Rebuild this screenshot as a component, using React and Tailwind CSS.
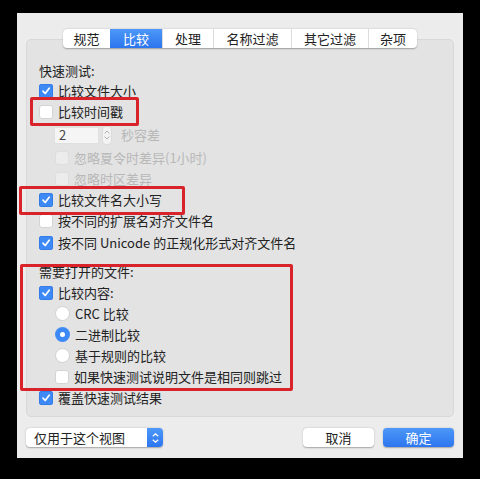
import React from 'react';

const font = { fontFamily: '"Noto Sans CJK SC", "Noto Sans", sans-serif' };

function Check({ checked, disabled }) {
  if (checked) {
    return (
      <span className="w-[14px] h-[14px] rounded-[3px] bg-[#3d8af7] flex items-center justify-center shrink-0 shadow-[inset_0_0_0_0.5px_#2a6fd8]">
        <svg width="10" height="10" viewBox="0 0 10 10">
          <path d="M2 5.2 L4.2 7.5 L8.2 2.2" fill="none" stroke="white" strokeWidth="1.7" strokeLinecap="round" strokeLinejoin="round" />
        </svg>
      </span>
    );
  }
  return (
    <span
      className={`w-[14px] h-[14px] rounded-[3px] shrink-0 ${
        disabled ? 'bg-[#ececec] border border-[#dedede]' : 'bg-white border border-[#d4d4d4]'
      }`}
    />
  );
}

function Radio({ selected }) {
  if (selected) {
    return (
      <span className="w-[15px] h-[15px] rounded-full bg-[#3d8af7] flex items-center justify-center shrink-0">
        <span className="w-[5px] h-[5px] rounded-full bg-white" />
      </span>
    );
  }
  return <span className="w-[15px] h-[15px] rounded-full bg-white border border-[#d0d0d0] shrink-0" />;
}

function Row({ h = 'h-[21px]', indent, children }) {
  return <div className={`flex items-center ${h} ${indent ? 'pl-[28px]' : 'pl-[12px]'} gap-[5px]`}>{children}</div>;
}

export default function App() {
  const tabs = ['规范', '比较', '处理', '名称过滤', '其它过滤', '杂项'];
  const widths = ['w-[47px]', 'w-[52px]', 'w-[51px]', 'w-[78px]', 'w-[77px]', 'w-[49px]'];

  return (
    <div className="w-[480px] h-[479px] bg-black relative text-[13px] text-[#222]" style={font}>
      <div className="absolute left-[17px] top-[13px] w-[446px] h-[445px] bg-[#ececec] flex flex-col px-[9px] pt-[16px]">
        {/* tabs */}
        <div className="flex justify-center relative z-10">
          <div className="flex h-[19px] bg-white rounded-[4px] shadow-[0_0.5px_1.5px_rgba(0,0,0,0.3)] overflow-hidden">
            {tabs.map((t, i) => (
              <div
                key={t}
                className={`${widths[i]} flex items-center justify-center leading-none ${
                  i === 1
                    ? 'bg-gradient-to-b from-[#4d98f8] to-[#2c75ef] text-white'
                    : 'text-[#222]'
                } ${i > 1 ? 'border-l border-[#dcdcdc]' : ''}`}
              >
                {t}
              </div>
            ))}
          </div>
        </div>

        {/* group box */}
        <div className="-mt-[9px] h-[378px] bg-[#e3e3e3] rounded-[5px] border border-[#d8d8d8] pt-[21px] flex flex-col">
          <Row h="h-[20px]">
            <span>快速测试:</span>
          </Row>
          <Row h="h-[20px]">
            <Check checked />
            <span>比较文件大小</span>
          </Row>
          <Row h="h-[22px]">
            <Check />
            <span>比较时间戳</span>
          </Row>
          <div className="flex items-center h-[24px] pl-[27px]">
            <div className="w-[45px] h-[17px] bg-[#f5f5f5] border border-[#e0e0e0] flex items-center pl-[4px] text-[#444]">2</div>
            <div className="ml-[3px] w-[10px] h-[19px] rounded-[4px] bg-[#f3f3f3] border border-[#dcdcdc] flex flex-col items-center justify-center gap-[2px]">
              <svg width="6" height="4" viewBox="0 0 6 4"><path d="M0.5 3.5 L3 1 L5.5 3.5" fill="none" stroke="#b0b0b0" strokeWidth="1" /></svg>
              <svg width="6" height="4" viewBox="0 0 6 4"><path d="M0.5 0.5 L3 3 L5.5 0.5" fill="none" stroke="#b0b0b0" strokeWidth="1" /></svg>
            </div>
            <span className="ml-[9px] text-[#b8b8b8]">秒容差</span>
          </div>
          <Row indent>
            <Check disabled />
            <span className="text-[#b8b8b8]">忽略夏令时差异(1小时)</span>
          </Row>
          <Row indent>
            <Check disabled />
            <span className="text-[#b8b8b8]">忽略时区差异</span>
          </Row>
          <Row>
            <Check checked />
            <span>比较文件名大小写</span>
          </Row>
          <Row h="h-[22px]">
            <Check />
            <span>按不同的扩展名对齐文件名</span>
          </Row>
          <Row>
            <Check checked />
            <span>按不同 Unicode 的正规化形式对齐文件名</span>
          </Row>
          <div className="h-[9px]" />
          <Row h="h-[20px]">
            <span>需要打开的文件:</span>
          </Row>
          <Row>
            <Check checked />
            <span>比较内容:</span>
          </Row>
          <Row indent>
            <Radio />
            <span>CRC 比较</span>
          </Row>
          <Row indent>
            <Radio selected />
            <span>二进制比较</span>
          </Row>
          <Row indent>
            <Radio />
            <span>基于规则的比较</span>
          </Row>
          <Row indent>
            <Check />
            <span>如果快速测试说明文件是相同则跳过</span>
          </Row>
          <Row>
            <Check checked />
            <span>覆盖快速测试结果</span>
          </Row>
        </div>

        {/* bottom bar */}
        <div className="flex items-center mt-[11px] h-[19px]">
          <div className="w-[137px] h-[19px] bg-white rounded-[4px] shadow-[0_0.5px_1.5px_rgba(0,0,0,0.3)] flex items-center overflow-hidden">
            <span className="flex-1 pl-[8px] leading-none">仅用于这个视图</span>
            <div className="w-[16px] h-full bg-gradient-to-b from-[#4d98f8] to-[#2c75ef] flex flex-col items-center justify-center gap-[2px]">
              <svg width="7" height="4" viewBox="0 0 7 4"><path d="M0.8 3.3 L3.5 0.8 L6.2 3.3" fill="none" stroke="white" strokeWidth="1.2" /></svg>
              <svg width="7" height="4" viewBox="0 0 7 4"><path d="M0.8 0.7 L3.5 3.2 L6.2 0.7" fill="none" stroke="white" strokeWidth="1.2" /></svg>
            </div>
          </div>
          <div className="flex-1" />
          <div className="w-[71px] h-[19px] bg-white rounded-[4px] shadow-[0_0.5px_1.5px_rgba(0,0,0,0.3)] flex items-center justify-center leading-none">
            取消
          </div>
          <div className="ml-[9px] w-[71px] h-[19px] rounded-[4px] bg-gradient-to-b from-[#4d98f8] to-[#2c75ef] text-white flex items-center justify-center leading-none shadow-[0_0.5px_1.5px_rgba(0,0,0,0.3)]">
            确定
          </div>
        </div>
      </div>

      {/* red annotation boxes */}
      <div className="absolute left-[30px] top-[97px] w-[109px] h-[29px] border-[3px] border-[#d8232a] rounded-[2px]" />
      <div className="absolute left-[19px] top-[186px] w-[166px] h-[29px] border-[3px] border-[#d8232a] rounded-[2px]" />
      <div className="absolute left-[20px] top-[264px] w-[273px] h-[127px] border-[3px] border-[#d8232a] rounded-[2px]" />
    </div>
  );
}
